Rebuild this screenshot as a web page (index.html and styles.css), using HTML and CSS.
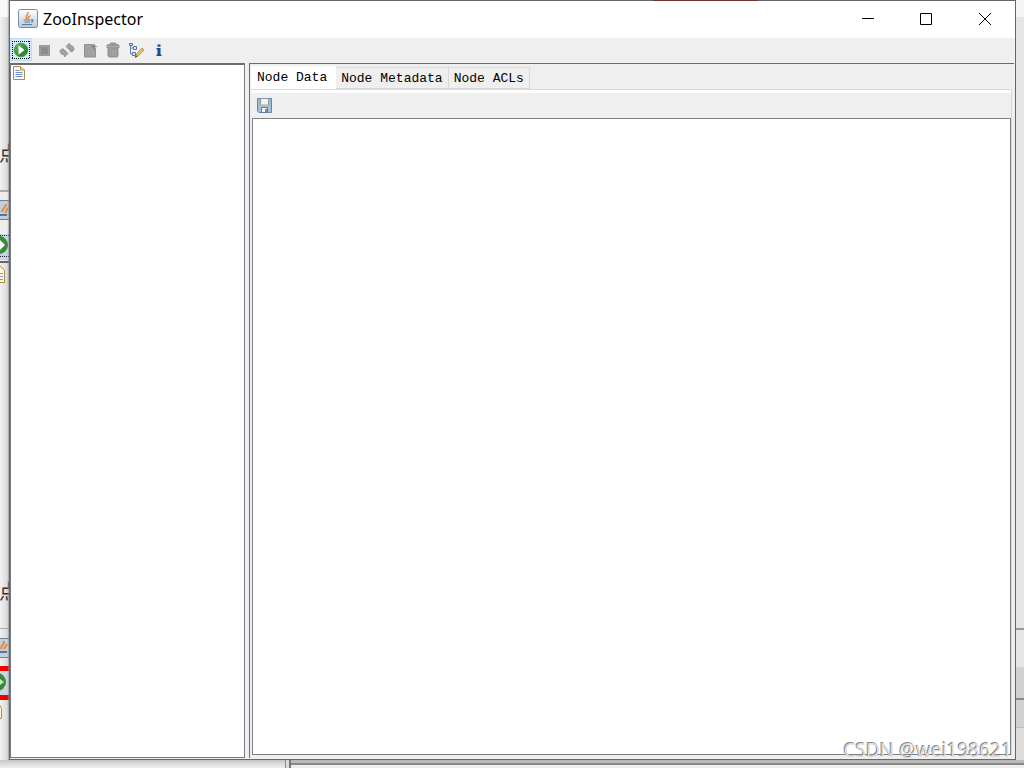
FILE: index.html
```
<!DOCTYPE html>
<html lang="en">
<head>
<meta charset="utf-8">
<title>ZooInspector</title>
<link rel="stylesheet" href="styles.css">
</head>
<body>
<div class="backdrop" aria-hidden="true">
  <span class="glyph glyph-upper">点</span>
  <span class="glyph glyph-lower">点</span>
  <svg class="strip strip-left" width="9" height="768" viewBox="0 0 9 768">
    <path fill="#f8f8f8" d="M0 0h9v17H0z"/>
    <path fill="#aaa" d="M0 190h9v2H0z"/>
    <path fill="#eee" d="M0 192h9v9H0zM0 219h9v15H0z"/>
    <path fill="#c2d0db" d="M0 201h9v18H0z"/>
    <path stroke="#6c8297" d="M0 200.500h9M0 219.500h9"/>
    <path stroke="#e9893f" stroke-width="2" fill="none" d="M2 212c0-4 4-3 4-8M5 213l3-5"/>
    <path stroke="#52779d" stroke-width="2" d="M0 215h7"/>
    <path fill="#c5d6e4" d="M0 234h9v26H0z"/>
    <circle cx="-1" cy="245" r="9" fill="#388b38"/>
    <path fill="#fff" d="M0 240l5 5-5 5z"/>
    <path stroke="#222" stroke-dasharray="1 1" d="M0 235.500h9M0 256.500h9"/>
    <path stroke="#666" stroke-width="2" d="M0 262h9"/>
    <path fill="#fff8df" stroke="#a98d50" d="M-2 266.500h3l3.500 4v12H-2"/>
    <path stroke="#879bb7" d="M0 273.500h3M0 276.500h3M0 279.500h3"/>
    <path fill="#aaa" d="M0 628h9v1H0z"/>
    <path fill="#c2d0db" d="M0 639h9v18H0z"/>
    <path stroke="#6c8297" d="M0 638.500h9M0 657.500h9"/>
    <path stroke="#e9893f" stroke-width="2" fill="none" d="M1 649c0-4 3-3 3-8M4 649l3-5"/>
    <path stroke="#52779d" stroke-width="2" d="M0 652h7"/>
    <path fill="#c9d5e1" d="M0 671h9v24H0z"/>
    <path fill="#ef0000" d="M0 666h9v5H0zM0 695h9v5H0z"/>
    <circle cx="-3" cy="682" r="9" fill="#388b38"/>
    <path fill="#cce5c7" d="M0 679l4 3-4 3z"/>
    <path fill="#fff8df" stroke="#a98d50" d="M-2 705.500h2l1.500 3v10H-2"/>
  </svg>
  <svg class="strip strip-right" width="9" height="768" viewBox="0 0 9 768">
    <path fill="#f5f5f5" d="M0 0h9v17H0z"/>
    <path fill="#e6e6e6" d="M0 17h9v611H0zM0 630h9v37H0z"/>
    <path fill="#999" d="M0 628h9v2H0z"/>
    <path fill="#d1d1d1" d="M0 667h9v60H0z"/>
    <path fill="#888" d="M0 698h9v2H0z"/>
    <path fill="#bbb" d="M0 727h9v1H0z"/>
    <path fill="#ddd" d="M0 728h9v40H0z"/>
  </svg>
  <div class="under">
    <span class="under-left"></span>
    <span class="under-right"></span>
  </div>
</div>

<main class="window">
  <span class="accent" aria-hidden="true"></span>
  <header class="titlebar">
    <svg class="java" width="20" height="20" viewBox="0 0 20 20">
      <defs><linearGradient id="jv" x2="0" y2="1"><stop stop-color="#fff"/><stop offset="1" stop-color="#b9c8d4"/></linearGradient></defs>
      <rect x=".5" y=".5" width="19" height="18" rx="2" fill="url(#jv)" stroke="#7d8c99"/>
      <path d="M9 10c-3-3 2-4 1-7M10.500 10c-1-2 1-3 2-3.500" fill="none" stroke="#e67e33" stroke-width="1.300"/>
      <path d="M5.500 11h7M6.500 13h5.500M4 15.500h10M13 11c3-1 2 2 0 2" fill="none" stroke="#5180a6" stroke-width="1.200"/>
    </svg>
    <h1 class="title">ZooInspector</h1>
    <div class="controls">
      <button class="control" aria-label="Minimize"><svg width="14" height="14" viewBox="0 0 14 14"><path d="M1 6.500h12"/></svg></button>
      <button class="control" aria-label="Maximize"><svg width="14" height="14" viewBox="0 0 14 14"><path d="M1.500 1.500h11v11h-11z"/></svg></button>
      <button class="control" aria-label="Close"><svg width="14" height="14" viewBox="0 0 14 14"><path d="M1 1l12 12M13 1L1 13"/></svg></button>
    </div>
  </header>

  <nav class="toolbar" aria-label="Main">
    <button class="tool tool-focus" aria-label="Connect">
      <svg width="18" height="18" viewBox="0 0 18 18">
        <defs><linearGradient id="gr" x2="1" y2="1"><stop stop-color="#79bd68"/><stop offset=".6" stop-color="#2e8a37"/><stop offset="1" stop-color="#35823b"/></linearGradient></defs>
        <circle cx="9" cy="9" r="6.800" fill="url(#gr)" stroke="#4c9455"/>
        <path d="M6.500 4.200v9.600L12.500 9z" fill="#fff"/>
        <path d="M0 .5h18M0 17.500h18M.5 0v18M17.500 0v18" stroke="#000" stroke-dasharray="1 1"/>
      </svg>
    </button>
    <button class="tool" aria-label="Disconnect" disabled>
      <svg width="16" height="16" viewBox="0 0 16 16"><path d="M3 3h11v11H3z" fill="#999"/><path d="M4.500 4.500h8v8h-8z" fill="#8c8c8c" stroke="#a0a0a0"/></svg>
    </button>
    <button class="tool" aria-label="Refresh" disabled>
      <svg width="16" height="16" viewBox="0 0 16 16" fill="#a3a3a3" stroke="#858585" stroke-width=".7"><path d="M7 4.500L10.500 1v2c2.500 0 4.500 1.500 4.500 5l-1.500 1.500H11C11.500 7.500 11.500 7 10.500 6.500V8z"/><path d="M9 11.500L5.500 15v-2C3 13 1 11.500 1 8.500L2.500 7H5c-.5 2-.5 2 .5 2.500V8z"/></svg>
    </button>
    <button class="tool" aria-label="Add node" disabled>
      <svg width="16" height="16" viewBox="0 0 16 16"><path d="M2.500 2.500h8v4h3v8.500h-11z" fill="#a2a2a2" stroke="#919191"/><path d="M12 1l1 2.500 2.500 1-2.500 1-1 2.500-1-2.500-2.500-1 2.500-1z" fill="#888"/></svg>
    </button>
    <button class="tool" aria-label="Delete node" disabled>
      <svg width="16" height="16" viewBox="0 0 16 16"><path d="M5.500.500h5l1 1.500H13l1.500 1.500V6h-13V3.500L3 2h1.500zM2.500 6h11v8l-1.500 1.500H4L2.500 14z" fill="#969696"/><path d="M2 4.500h12M5.500 7v7M8 7v7M10.500 7v7" stroke="#adadad"/></svg>
    </button>
    <button class="tool" aria-label="Node viewers">
      <svg width="16" height="16" viewBox="0 0 16 16"><path d="M2.500 1v11H5M2.500 6H5" fill="none" stroke="#617fac"/><path d="M1.500 1.500h3v2h-3zM5.500 4.500h3v3h-3zM4.500 10.500h3v3h-3z" fill="#dce8f7" stroke="#5474a4"/><path d="M7 15.500l1.500-3.500L14 6l2 2-5.500 5.700z" fill="#e9c366" stroke="#a17b3e" stroke-width=".7"/><path d="M7 15.500l1-2.300 1.300 1.300z" fill="#453522"/></svg>
    </button>
    <button class="tool" aria-label="About">
      <svg width="16" height="16" viewBox="0 0 16 16" fill="#124f91"><path d="M6.500 2.500h3v2.300h-3zM5.500 6h4v6.500h1V14h-5v-1.500h1v-5h-1z"/></svg>
    </button>
  </nav>

  <div class="workspace">
    <aside class="tree">
      <svg width="12" height="14" viewBox="0 0 12 14"><path d="M.5.5h7L11.500 4v9.500H.5z" fill="#f7faff" stroke="#a98c45"/><path d="M7.500.5V4h4" fill="#ead69c" stroke="#b69340"/><path d="M2.500 4.500h4M2.500 6.500h7M2.500 8.500h7M2.500 10.500h7" stroke="#738fbe"/></svg>
    </aside>
    <section class="detail">
      <div class="tabs" role="tablist">
        <button class="tab tab-active" role="tab" aria-selected="true">Node Data</button>
        <button class="tab" role="tab" aria-selected="false">Node Metadata</button>
        <button class="tab" role="tab" aria-selected="false">Node ACLs</button>
      </div>
      <div class="panel" role="tabpanel">
        <div class="panel-tools">
          <button class="tool tool-save" aria-label="Save">
            <svg width="15" height="15" viewBox="0 0 15 15"><defs><linearGradient id="sv" x2="0" y2="1"><stop stop-color="#a6bbca"/><stop offset="1" stop-color="#a2c0e4"/></linearGradient></defs><path d="M.5.5h14v14H2L.5 13z" fill="url(#sv)" stroke="#6684a4"/><path d="M3.500.5h8v6h-8z" fill="#f1f4f0" stroke="#8297aa"/><path d="M4 6.500h7" stroke="#e5d196"/><path d="M4.500 9.500h6v5h-6z" fill="#eef3f5" stroke="#617c99"/><path d="M8 11h2v3H8z" fill="#7890a6"/></svg>
          </button>
        </div>
        <textarea class="data" aria-label="Node data"></textarea>
      </div>
    </section>
  </div>
</main>
<div class="watermark">CSDN @wei198621</div>
</body>
</html>
```
FILE: styles.css
```
* { box-sizing: border-box; }
body {
  margin: 0;
  height: 100vh;
  padding: 0 8px 8px 9px;
  overflow: hidden;
  background: #e9e9e9;
  font-family: "Noto Sans", "Noto Sans CJK SC", sans-serif;
}
button { border: 0; padding: 0; background: none; font: inherit; color: inherit; }
svg { display: block; flex: none; }

.backdrop { position: absolute; inset: 0; overflow: hidden; background: linear-gradient(90deg, #f2f2f2, #d4d4d4 9px); }
.glyph { position: absolute; left: -1px; font: 20px/24px "Noto Sans CJK SC", sans-serif; color: #333; }
.glyph-upper { top: 141px; }
.glyph-lower { top: 579px; }
.strip { position: absolute; top: 0; }
.strip-left { left: 0; }
.strip-right { right: 0; }
.under { position: absolute; inset: auto 0 0 0; height: 8px; display: flex; gap: 3px; background: #ddd; }
.under-left { width: 286px; border-right: 1px solid #888; background: linear-gradient(#c8c8c8, #efefef); }
.under-right { flex: 1; border-left: 2px solid #777; background: linear-gradient(#bbb 3px, #888 3px, #888 5px, #eee 5px); }

.window {
  position: relative;
  display: flex;
  flex-direction: column;
  height: 100%;
  border: 1px solid #66666a;
  background: #efefef;
  box-shadow: -1px 0 1px #8888;
}
.accent { position: absolute; top: -1px; left: 64%; width: 105px; height: 1px; background: #733328; }
.titlebar { display: flex; align-items: center; flex: none; height: 37px; padding: 0 0 2px 8px; gap: 5px; background: #fff; }
.title { flex: 1; margin: 0; font: 400 16px/24px "Noto Sans", sans-serif; color: #000; }
.controls { display: flex; padding-right: 1px; }
.control { display: grid; place-items: center; width: 58px; height: 35px; }
.control:last-child { width: 59px; }
.control svg { fill: none; stroke: #000; }

.toolbar { display: flex; align-items: center; flex: none; height: 25px; padding-bottom: 2px; }
.tool { display: grid; place-items: center; width: 23px; height: 23px; }
.tool-focus { background: #d5e9f8; border: 1px solid #bcdcf4; width: 22px; }

.workspace { display: grid; grid-template-columns: 235px minmax(0, 1fr); column-gap: 4px; flex: 1; min-height: 0; padding: 0 1px 1px 0; }
.tree { border: 1px solid #777c84; border-top: 2px solid #6c6c70; background: #fff; padding: 1px 2px; }
.detail { display: flex; flex-direction: column; min-width: 0; border-top: 1px solid #6c6c6c; border-left: 1px solid #6c6c6c; padding: 2px 2px 2px 1px; }
.tabs { display: flex; align-items: flex-end; height: 23px; flex: none; }
.tab { height: 22px; padding: 2px 5px 0; border: 1px solid #d9d9d9; border-left: 0; font: 13px/18px "Liberation Mono", monospace; color: #000; white-space: nowrap; }
.tab-active { height: 23px; padding: 0 8px 0 6px; background: #fff; border-color: #fff; }
.panel { display: flex; flex-direction: column; flex: 1; min-height: 0; border-top: 1px solid #d9d9d9; border-right: 1px solid #d9d9d9; padding: 0 0 1px 1px; }
.panel-tools { flex: none; height: 28px; padding: 2px 0 0 1px; border-top: 3px solid #fff; }
.tool-save { height: 20px; }
.data { flex: 1; width: 100%; min-height: 0; margin: 0; border: 1px solid #7a8087; border-radius: 0; resize: none; outline: 0; background: #fff; font: 13px/20px "Liberation Mono", monospace; }

.watermark { position: absolute; right: 12px; bottom: 4px; font: 19px/28px "Noto Sans", sans-serif; color: #dcdcdc; text-shadow: -1px -1px 0 #858585; }
```
